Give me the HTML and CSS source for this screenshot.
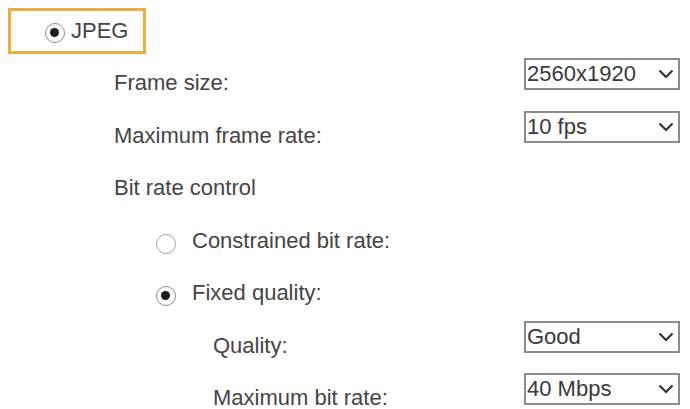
FILE: index.html
```html
<!DOCTYPE html>
<html lang="en">

<head>
    <meta charset="UTF-8">
    <title>Video settings - JPEG</title>
    <link rel="stylesheet" href="styles.css">
</head>

<body>
    <div class="page">
        <div class="format-box">
            <span class="radio checked"></span>
            <span class="format-name">JPEG</span>
        </div>

        <div class="row">
            <span class="label">Frame size:</span>
            <div class="select">
                <span>2560x1920</span>
                <svg class="chevron" viewBox="0 0 16 10"><path d="M1.5 1.5 L8 8 L14.5 1.5" /></svg>
            </div>
        </div>

        <div class="row">
            <span class="label">Maximum frame rate:</span>
            <div class="select">
                <span>10 fps</span>
                <svg class="chevron" viewBox="0 0 16 10"><path d="M1.5 1.5 L8 8 L14.5 1.5" /></svg>
            </div>
        </div>

        <div class="row">
            <span class="label">Bit rate control</span>
        </div>

        <div class="row level2">
            <span class="radio"></span>
            <span class="label">Constrained bit rate:</span>
        </div>

        <div class="row level2">
            <span class="radio checked"></span>
            <span class="label">Fixed quality:</span>
        </div>

        <div class="row level3">
            <span class="label">Quality:</span>
            <div class="select">
                <span>Good</span>
                <svg class="chevron" viewBox="0 0 16 10"><path d="M1.5 1.5 L8 8 L14.5 1.5" /></svg>
            </div>
        </div>

        <div class="row level3">
            <span class="label">Maximum bit rate:</span>
            <div class="select">
                <span>40 Mbps</span>
                <svg class="chevron" viewBox="0 0 16 10"><path d="M1.5 1.5 L8 8 L14.5 1.5" /></svg>
            </div>
        </div>
    </div>
</body>

</html>
```

FILE: styles.css
```css
body {
    margin: 0;
    background: white;
    font-family: "Liberation Sans", Arial, sans-serif;
    font-size: 22px;
    color: #454545;
}

.page {
    width: 690px;
    height: 409px;
    padding: 8px 10px 0 0;
    box-sizing: border-box;
    overflow: hidden;
}

/* highlighted format choice */
.format-box {
    display: flex;
    align-items: center;
    width: 138px;
    height: 46px;
    margin: 0 0 4px 8px;
    padding-left: 34px;
    box-sizing: border-box;
    border: 3px solid #e8b040;
}

.format-box .radio {
    margin: 4px 6px 0 0;
}

.format-name {
    line-height: 24px;
}

.row {
    display: flex;
    align-items: flex-start;
    height: 52.5px;
    padding-left: 114px;
}

.row.level2 {
    padding-left: 156px;
}

.row.level3 {
    padding-left: 213px;
}

.label {
    margin-top: 13px;
    line-height: 24px;
    white-space: nowrap;
}

.radio {
    position: relative;
    flex: none;
    width: 20px;
    height: 20px;
    border: 1.5px solid #a4a4a4;
    border-radius: 50%;
    box-sizing: border-box;
    background: white;
}

.row .radio {
    margin: 18px 16px 0 0;
}

.radio.checked {
    border-color: #8e8e8e;
}

.radio.checked::after {
    content: "";
    position: absolute;
    left: 4px;
    top: 4px;
    width: 9px;
    height: 9px;
    border-radius: 50%;
    background: #1c1c1c;
}

.select {
    display: flex;
    align-items: center;
    justify-content: space-between;
    width: 156px;
    height: 32px;
    margin-left: auto;
    padding: 0 4px 0 1px;
    box-sizing: border-box;
    border: 2px solid #8c8c8c;
    line-height: 24px;
    color: #3a3a3a;
}

.chevron {
    width: 16px;
    height: 10px;
    fill: none;
    stroke: #333;
    stroke-width: 2.2;
}
```
